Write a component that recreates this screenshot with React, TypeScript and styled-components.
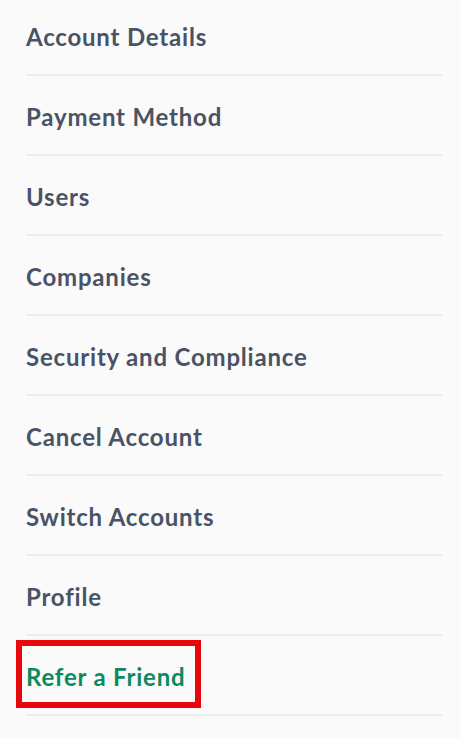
import React, { FC, ReactElement } from 'react';
import styled, { createGlobalStyle } from 'styled-components';

const GlobalStyle = createGlobalStyle`
    html, body {
        margin: 0;
        padding: 0;
        background-color: #fafafa;
    }

    body {
        font-family: Lato, 'Open Sans', sans-serif;
    }
`;

const Menu = styled.nav`
    display: flex;
    flex-direction: column;
    width: 416px;
    margin: -4px 0 0 26px;
`;

const Item = styled.div`
    display: flex;
    align-items: center;
    height: 74px;
    padding-top: 4px;
    border-bottom: 2px solid #ececec;
`;

const Link = styled.a<{ $active?: boolean; $marked?: boolean }>`
    position: relative;
    font-size: 24px;
    line-height: 30px;
    font-weight: 700;
    letter-spacing: 0.8px;
    color: ${({ $active }): string => ($active ? '#0c8a5e' : '#4a5366')};
    text-decoration: none;
    cursor: pointer;

    &::after {
        display: ${({ $marked }): string => ($marked ? 'block' : 'none')};
        content: '';
        position: absolute;
        left: -10px;
        right: -15px;
        top: -22px;
        bottom: -16px;
        border: 6px solid #e8070c;
    }
`;

const items = [
    'Account Details',
    'Payment Method',
    'Users',
    'Companies',
    'Security and Compliance',
    'Cancel Account',
    'Switch Accounts',
    'Profile',
];

const App: FC = (): ReactElement => (
    <>
        <GlobalStyle />
        <Menu>
            {items.map((label) => (
                <Item key={label}>
                    <Link>{label}</Link>
                </Item>
            ))}
            <Item>
                <Link $active $marked>
                    Refer a Friend
                </Link>
            </Item>
        </Menu>
    </>
);

export default App;
